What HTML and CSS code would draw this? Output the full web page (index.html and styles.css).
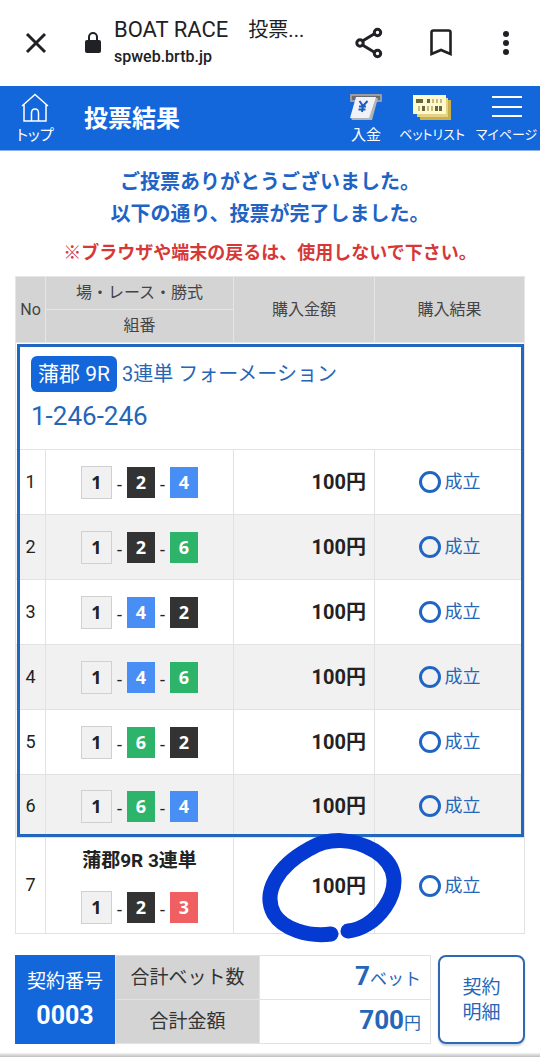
FILE: index.html
```html
<!DOCTYPE html>
<html lang="ja">
<head>
<meta charset="utf-8">
<meta name="viewport" content="width=device-width, initial-scale=1">
<title>BOAT RACE　投票結果</title>
<link rel="stylesheet" href="styles.css">
</head>
<body>
<header class="browser">
  <button class="icon-btn" type="button" aria-label="閉じる"><svg width="24" height="24" viewBox="0 0 24 24" fill="none" stroke="currentColor" stroke-width="3"><path d="M3 3l18 18M21 3L3 21"/></svg></button>
  <svg class="lock" width="18" height="22" viewBox="0 0 18 22"><rect x="1" y="8" width="16" height="13" rx="2" fill="currentColor"/><path d="M5 9V5a4 4 0 0 1 8 0v4" fill="none" stroke="currentColor" stroke-width="2"/></svg>
  <div class="page-info">
    <div class="page-name">BOAT RACE<span class="page-name-ja">　投票...</span></div>
    <div class="page-host">spweb.brtb.jp</div>
  </div>
  <div class="browser-actions">
    <button class="icon-btn" type="button" aria-label="共有"><svg width="30" height="32" viewBox="0 0 30 32" fill="none" stroke="currentColor" stroke-width="3"><path d="M8.500 14L20 7M8.500 18L20 25"/><circle cx="6" cy="16" r="3.200"/><circle cx="23.500" cy="5.500" r="3.200"/><circle cx="23.500" cy="26.500" r="3.200"/></svg></button>
    <button class="icon-btn" type="button" aria-label="ブックマーク"><svg width="22" height="28" viewBox="0 0 22 28" fill="none" stroke="currentColor" stroke-width="2.600"><path d="M1.500 25V3.500Q1.500 1.500 3.500 1.500H18.500Q20.500 1.500 20.500 3.500V25L11 21Z"/></svg></button>
    <button class="icon-btn more" type="button" aria-label="メニュー"><svg width="8" height="26" viewBox="0 0 8 26" fill="currentColor"><circle cx="4" cy="4" r="3"/><circle cx="4" cy="13" r="3"/><circle cx="4" cy="22" r="3"/></svg></button>
  </div>
</header>

<nav class="appbar">
  <a class="nav-item nav-home" href="#"><svg width="28" height="30" viewBox="0 0 28 30" fill="none" stroke="currentColor" stroke-width="1.500"><path d="M1 13L14 1.500L27 13M3 11.500V28H25V11.500M10.500 28V20Q10.500 16 14 16T17.500 20V28"/></svg><span>トップ</span></a>
  <h1 class="title">投票結果</h1>
  <a class="nav-item nav-deposit" href="#"><svg width="34" height="30" viewBox="0 0 34 30"><rect x="1" y="1" width="32" height="8" rx="1" fill="#9a9da4"/><rect x="3" y="3" width="28" height="4" fill="#6a6a72"/><path d="M24 5h5L23 27H3l-1-2Z" fill="#b4b4b6"/><path d="M7 4H27L20 25H1Z" fill="#f0f2f7"/><path d="M10.500 8l3.500 5 4.500-5M14 13l-1 6M10 13.500h7M9.500 16.500h7" fill="none" stroke="#1c5dba" stroke-width="2"/></svg><span>入金</span></a>
  <a class="nav-item nav-list" href="#"><svg width="40" height="30" viewBox="0 0 40 30"><path d="M8 7H39V27H8Z" fill="#c8b04f"/><path d="M5 5H36V24H5Z" fill="#e5d382"/><path d="M1 2H34V21H1Z" fill="#fff9cf"/><path d="M4 6h7v4H4zM15 6h3v4h-3zM10 13h3v5h-3zM23 13h3v5h-3zM27 13h3v5h-3z" fill="#69653f"/><path d="M21 6v4M25 6v4M29 6v4M7 13v5M16 13v5M20 13v5" stroke="#b5a760" stroke-width="1.500"/></svg><span>ベットリスト</span></a>
  <a class="nav-item nav-menu" href="#"><svg width="30" height="30" viewBox="0 0 30 30" stroke="currentColor" stroke-width="2"><path d="M0 4H30M0 14H30M0 23H30"/></svg><span>マイページ</span></a>
</nav>

<main class="content">
  <p class="thanks">ご投票ありがとうございました。<br>以下の通り、投票が完了しました。</p>
  <p class="warning">※ブラウザや端末の戻るは、使用しないで下さい。</p>

  <table class="bets">
    <colgroup><col class="col-no"><col class="col-race"><col class="col-amount"><col class="col-result"></colgroup>
    <thead>
      <tr><th rowspan="2">No</th><th>場・レース・勝式</th><th rowspan="2">購入金額</th><th rowspan="2">購入結果</th></tr>
      <tr><th>組番</th></tr>
    </thead>
    <tbody class="group">
      <tr><td class="group-head" colspan="4">
        <div class="group-title"><span class="venue">蒲郡 9R</span><span>3連単 フォーメーション</span></div>
        <div class="group-numbers">1-246-246</div>
      </td></tr>
      <tr><td class="no">1</td><td><div class="combo"><b class="boat b1">1</b><i>-</i><b class="boat b2">2</b><i>-</i><b class="boat b4">4</b></div></td><td class="amount">100円</td><td><div class="result">成立</div></td></tr>
      <tr class="alt"><td class="no">2</td><td><div class="combo"><b class="boat b1">1</b><i>-</i><b class="boat b2">2</b><i>-</i><b class="boat b6">6</b></div></td><td class="amount">100円</td><td><div class="result">成立</div></td></tr>
      <tr><td class="no">3</td><td><div class="combo"><b class="boat b1">1</b><i>-</i><b class="boat b4">4</b><i>-</i><b class="boat b2">2</b></div></td><td class="amount">100円</td><td><div class="result">成立</div></td></tr>
      <tr class="alt"><td class="no">4</td><td><div class="combo"><b class="boat b1">1</b><i>-</i><b class="boat b4">4</b><i>-</i><b class="boat b6">6</b></div></td><td class="amount">100円</td><td><div class="result">成立</div></td></tr>
      <tr><td class="no">5</td><td><div class="combo"><b class="boat b1">1</b><i>-</i><b class="boat b6">6</b><i>-</i><b class="boat b2">2</b></div></td><td class="amount">100円</td><td><div class="result">成立</div></td></tr>
      <tr class="alt"><td class="no">6</td><td><div class="combo"><b class="boat b1">1</b><i>-</i><b class="boat b6">6</b><i>-</i><b class="boat b4">4</b></div></td><td class="amount">100円</td><td><div class="result">成立</div></td></tr>
    </tbody>
    <tbody>
      <tr class="single"><td class="no">7</td><td><div class="bet-name">蒲郡9R 3連単</div><div class="combo"><b class="boat b1">1</b><i>-</i><b class="boat b2">2</b><i>-</i><b class="boat b3">3</b></div></td>
      <td class="amount marked">100円<svg class="marker" width="141" height="111" viewBox="262 832 141 111" fill="none" stroke="#0439d2" stroke-width="15" stroke-linecap="round"><path d="M332 934C309 937 284 929 275 914C263 892 279 866 310 849C330 837 354 838 376 851C401 867 398 889 386 907C375 923 360 930 349 931"/></svg></td>
      <td><div class="result">成立</div></td></tr>
    </tbody>
  </table>
</main>

<footer class="summary">
  <div class="contract"><span>契約番号</span><strong>0003</strong></div>
  <table class="totals">
    <tr><th scope="row">合計ベット数</th><td><strong>7</strong>ベット</td></tr>
    <tr><th scope="row">合計金額</th><td><strong>700</strong>円</td></tr>
  </table>
  <button class="detail" type="button">契約<br>明細</button>
</footer>
<div class="bottom-edge"></div>
</body>
</html>
```

FILE: styles.css
```css
*, *::before { box-sizing: border-box; }

body {
  margin: 0;
  background: #fff;
  color: #222;
  font-family: Roboto, "Noto Sans CJK JP", sans-serif;
}

button { font: inherit; color: inherit; cursor: pointer; }

/* Browser bar */
.browser {
  display: flex;
  align-items: center;
  height: 86px;
  padding: 0 30px 0 24px;
  color: #202124;
}
.icon-btn { display: flex; padding: 0; border: 0; background: none; }
.lock { margin: 0 12px 0 36px; }
.page-info { flex: 1; white-space: nowrap; }
.page-name { font-size: 22px; line-height: 28px; }
.page-name-ja { font-size: 20px; }
.page-host { font-size: 16px; line-height: 26px; font-weight: 500; }
.browser-actions { display: flex; align-items: center; gap: 46px; }
.more { margin-left: 4px; }

/* Blue navigation bar */
.appbar {
  display: flex;
  align-items: center;
  height: 65px;
  padding-top: 2px;
  background: #1466db;
  color: #fff;
  border-bottom: 1px solid #8ab3ed;
}
.nav-item {
  display: flex;
  flex-direction: column;
  align-items: center;
  gap: 2px;
  color: #fff;
  text-decoration: none;
  font-size: 15px;
  line-height: 20px;
  font-feature-settings: "palt";
  white-space: nowrap;
}
.nav-home { width: 70px; }
.title { flex: 1; margin: 0 0 0 14px; font-size: 24px; line-height: 32px; }
.nav-deposit { width: 50px; }
.nav-list { width: 82px; font-size: 13px; }
.nav-menu { width: 67px; font-size: 13px; }

/* Messages */
.content { padding: 15px 15px 0; }
.thanks, .warning { margin: 0; text-align: center; font-weight: 700; white-space: nowrap; }
.thanks { color: #1f63c4; font-size: 20px; line-height: 32px; }
.warning { margin: 9px 0 10px; color: #d63838; font-size: 18px; line-height: 27px; }

/* Bet table */
.bets { width: 100%; table-layout: fixed; border-collapse: collapse; }
.col-no { width: 30px; }
.col-amount { width: 141px; }
.col-result { width: 150px; }
.bets th {
  height: 33px;
  padding: 0;
  border: 1px solid #e6e6e6;
  background: #d4d4d4;
  color: #444;
  font-size: 16px;
  line-height: 24px;
  font-weight: 400;
}
.bets td { height: 65px; padding: 0; border: 1px solid #e2e2e2; }
.group { outline: 3px solid #2267bf; outline-offset: -4px; }
.bets .group-head { height: 107px; padding: 11px 15px 15px; color: #2566b9; }
.group-title { display: flex; align-items: center; gap: 5px; font-size: 20px; line-height: 36px; }
.venue { padding: 0 7px; border-radius: 6px; background: #1466db; color: #fff; font-size: 21px; }
.group-numbers { padding-top: 7px; font-size: 26px; line-height: 34px; }
.alt td { background: #f1f1f1; }
.group tr:last-child td { height: 63px; }
.bets .no { padding-bottom: 2px; text-align: center; font-size: 18px; }
.combo { display: flex; align-items: center; justify-content: center; }
.combo i { width: 15px; padding-top: 4px; text-align: center; font-size: 18px; font-style: normal; }
.boat {
  width: 28px;
  color: #fff;
  font-family: "Noto Sans", sans-serif;
  font-size: 18px;
  line-height: 31px;
  text-align: center;
}
.b1 { width: 31px; border: 1px solid #d0d0d0; background: #f1f1f1; color: #222; }
.b2 { background: #333; }
.b3 { background: #f06063; }
.b4 { background: #488ef4; }
.b6 { background: #2eb36b; }
.bets .amount { padding: 0 8px 3px 0; text-align: right; font-size: 20px; font-weight: 700; }
.result { display: flex; align-items: center; justify-content: center; gap: 4px; color: #2566b9; font-size: 18px; line-height: 26px; }
.result::before { content: ""; width: 22px; height: 22px; border: 3px solid #2065c3; border-radius: 50%; }
.bets .single td { height: 96px; }
.bet-name { margin-bottom: 16px; text-align: center; font-size: 19px; line-height: 28px; font-weight: 700; }
.marked { position: relative; }
.marker { position: absolute; left: 27px; top: -6px; pointer-events: none; }

/* Totals */
.summary { display: flex; padding: 21px 15px 0; }
.contract {
  display: flex;
  flex-direction: column;
  align-items: center;
  justify-content: center;
  width: 100px;
  background: #1466db;
  color: #fff;
  font-size: 19px;
  line-height: 32px;
}
.contract strong { font-size: 25px; line-height: 36px; }
.totals { flex: 1; border-collapse: collapse; }
.totals th, .totals td { height: 44px; padding: 0; border: 1px solid #e2e2e2; white-space: nowrap; }
.totals th { width: 144px; background: #d4d4d4; color: #333; font-size: 19px; line-height: 28px; font-weight: 400; }
.totals td { padding-right: 9px; text-align: right; color: #2566b9; font-size: 17px; line-height: 28px; }
.totals strong { font-size: 26px; }
.detail {
  width: 87px;
  margin-left: 7px;
  padding: 0;
  border: 2px solid #2f68b3;
  border-radius: 8px;
  background: #fff;
  box-shadow: 0 2px 2px #ccd6e4;
  color: #2566b9;
  font-size: 19px;
  line-height: 25px;
}
.bottom-edge { height: 4px; margin-top: 9px; background: linear-gradient(#f4f4f4, #bdbdbd); }
```
